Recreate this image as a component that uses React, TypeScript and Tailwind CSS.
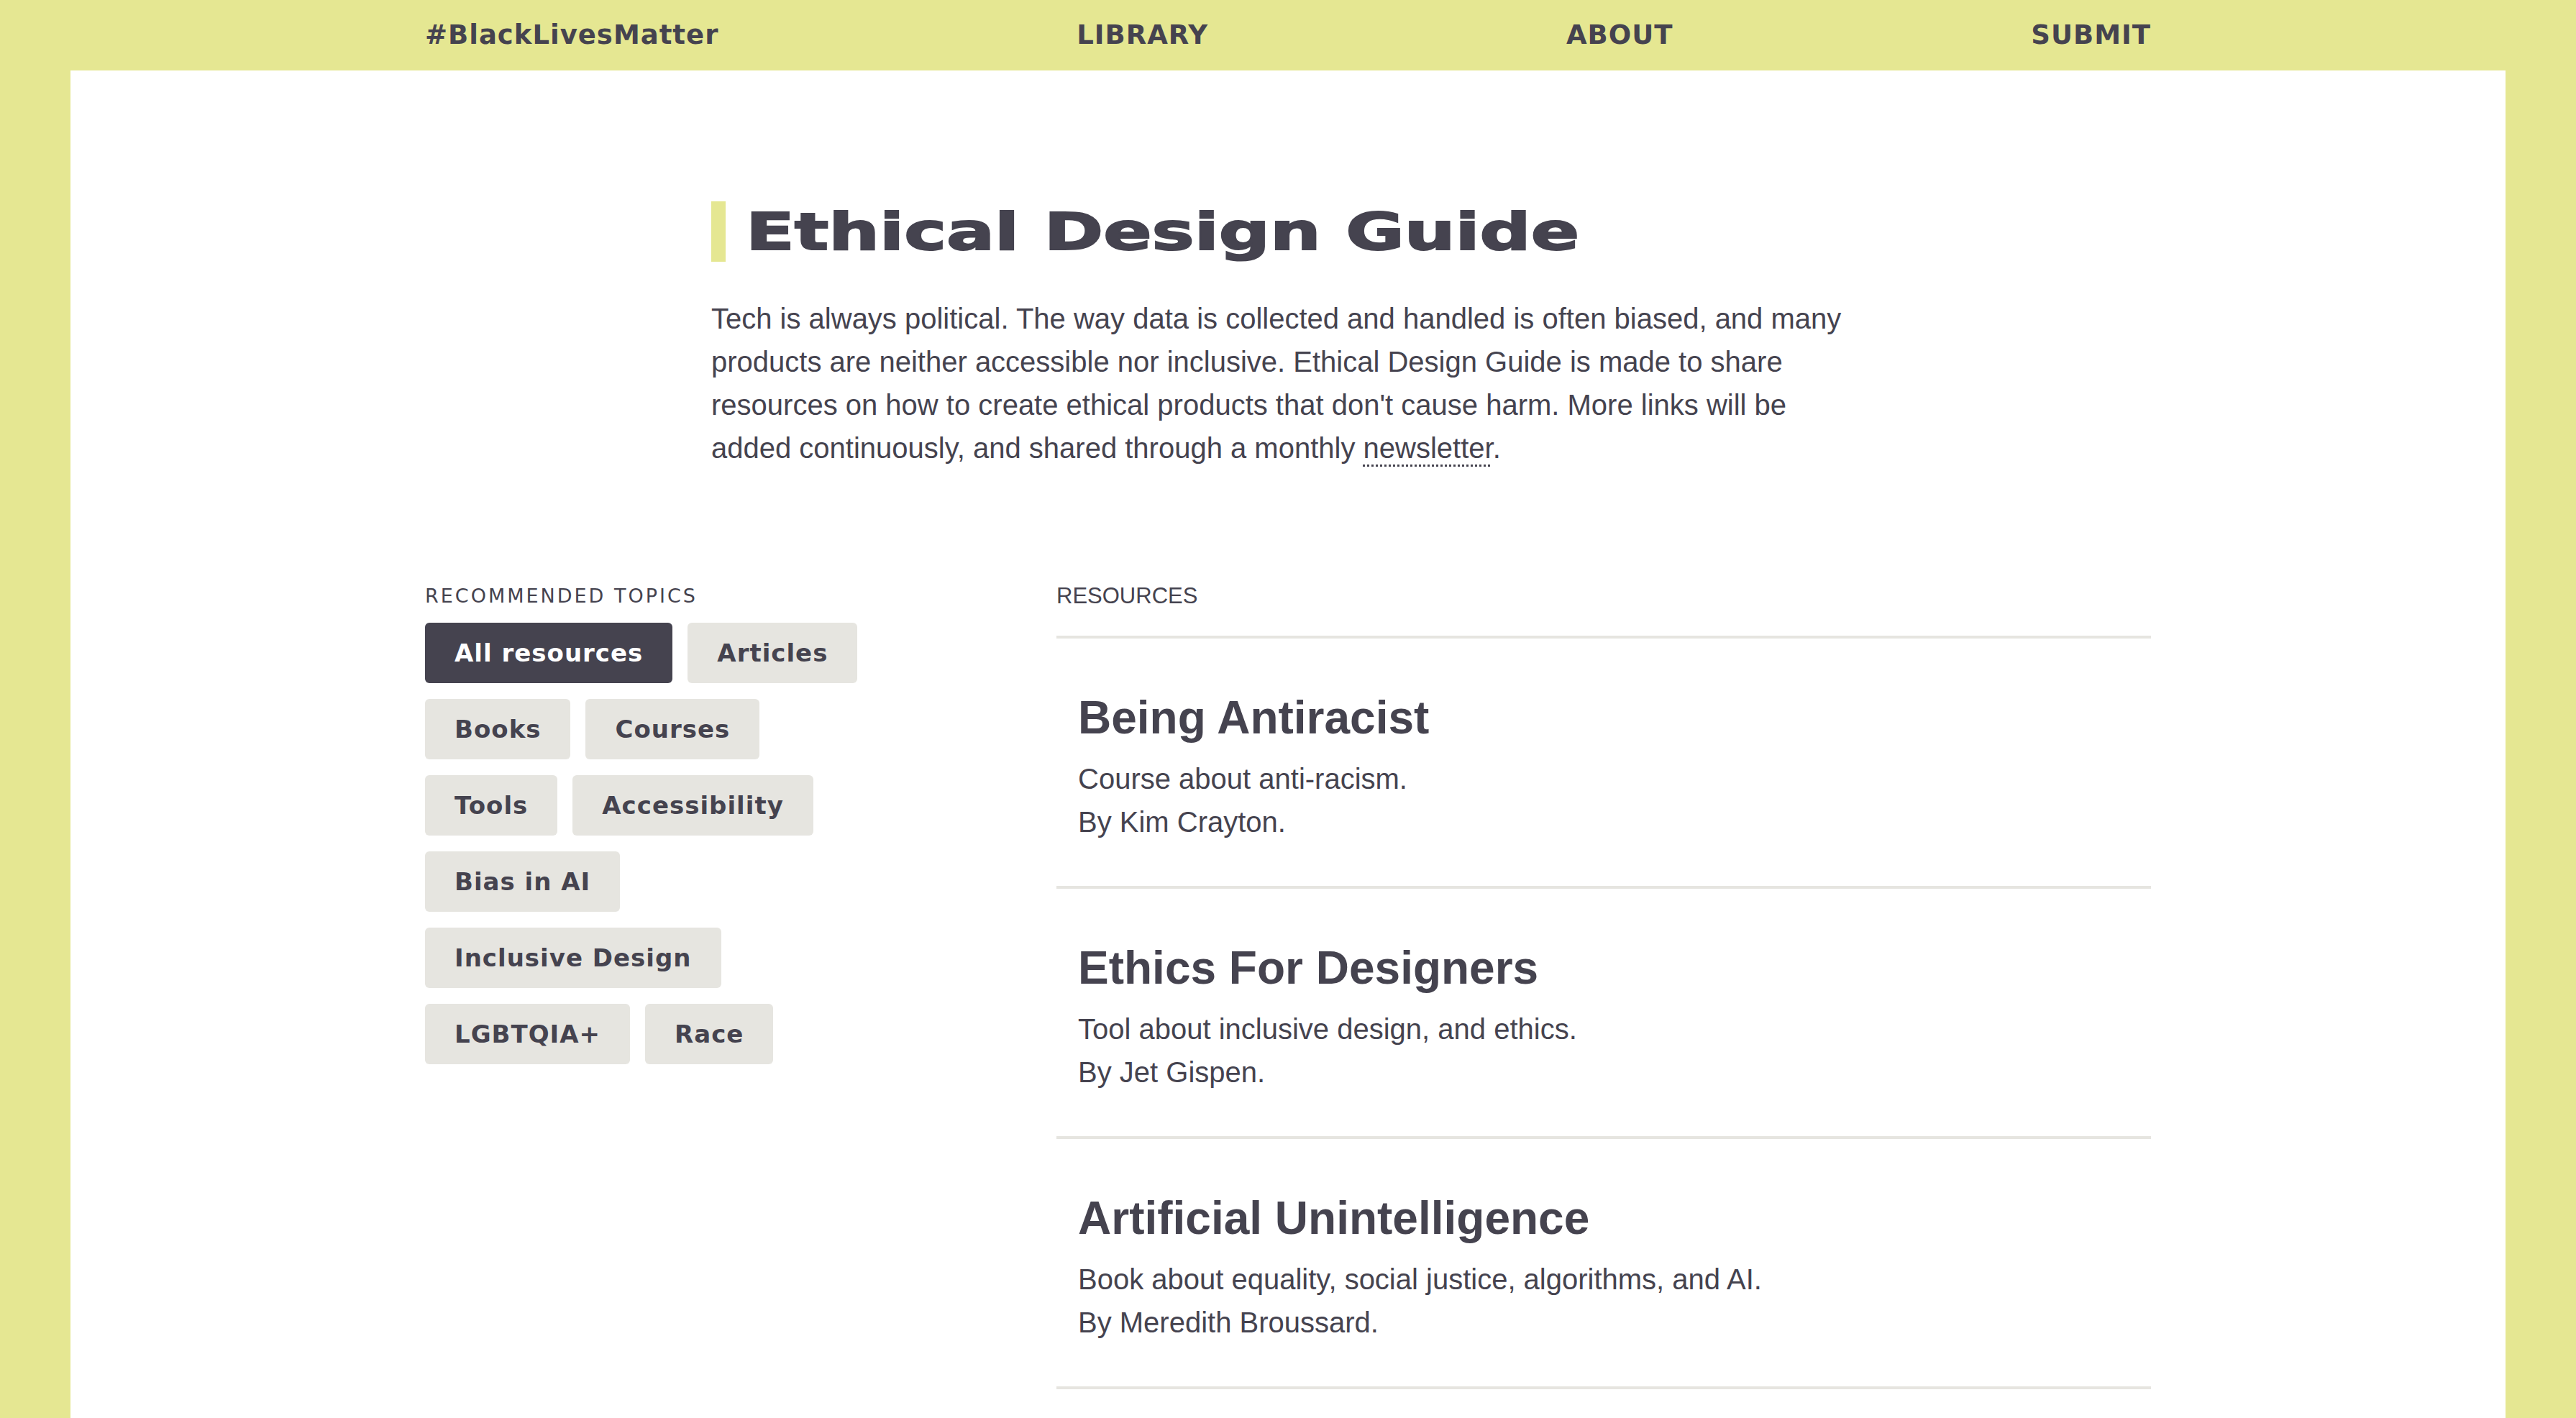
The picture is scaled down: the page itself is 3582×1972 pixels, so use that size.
const topics = [
  "All resources",
  "Articles",
  "Books",
  "Courses",
  "Tools",
  "Accessibility",
  "Bias in AI",
  "Inclusive Design",
  "LGBTQIA+",
  "Race",
];

const resources = [
  { title: "Being Antiracist", desc: "Course about anti-racism.", by: "Kim Crayton" },
  { title: "Ethics For Designers", desc: "Tool about inclusive design, and ethics.", by: "Jet Gispen" },
  { title: "Artificial Unintelligence", desc: "Book about equality, social justice, algorithms, and AI.", by: "Meredith Broussard" },
];

const wide = { fontFamily: '"DejaVu Sans", Verdana, sans-serif' };
const body = { fontFamily: '"Liberation Sans", Arial, sans-serif' };

export default function App() {
  return (
    <div className="min-h-screen bg-[#e5e792] px-[98px] text-[#45434f]">
      <header className="h-[98px]">
        <nav
          className="mx-auto flex h-full max-w-[2400px] items-center justify-between text-[37px] font-bold tracking-[1px]"
          style={wide}
        >
          <a href="#">#BlackLivesMatter</a>
          <a href="#">LIBRARY</a>
          <a href="#">ABOUT</a>
          <a href="#">SUBMIT</a>
        </nav>
      </header>

      <main className="min-h-[1874px] bg-white pb-[200px]">
        <section className="mx-auto w-[1604px] pt-[182px]">
          <div className="flex items-stretch gap-[28px]">
            <span className="block h-[84px] w-[20px] bg-[#e5e792]" />
            <h1
              className="origin-left scale-x-[1.38] text-[72px] leading-[84px] font-bold [-webkit-text-stroke:2px_#45434f]"
              style={wide}
            >
              Ethical Design Guide
            </h1>
          </div>
          <p className="mt-[49px] text-[40px] leading-[60px]" style={body}>
            Tech is always political. The way data is collected and handled is often biased, and many products
            are neither accessible nor inclusive. Ethical Design Guide is made to share resources on how to create
            ethical products that don't cause harm. More links will be added continuously, and shared through a
            monthly{" "}
            <a href="#" className="underline decoration-dotted decoration-[3px] underline-offset-[9px]">
              newsletter
            </a>
            .
          </p>
        </section>

        <div className="mx-auto mt-[158px] grid max-w-[2400px] grid-cols-[798px_1fr] gap-x-[80px]">
          <aside>
            <h2 className="h-[36px] text-[27px] leading-[36px] tracking-[3px]" style={wide}>
              RECOMMENDED TOPICS
            </h2>
            <div className="mt-[19px] flex w-[650px] flex-wrap gap-x-[21px] gap-y-[22px]">
              {topics.map((t, i) => (
                <button
                  key={t}
                  className={
                    i === 0
                      ? "flex h-[84px] items-center rounded-[6px] bg-[#45434f] px-[41px] text-[34px] font-bold tracking-[1px] text-white"
                      : "flex h-[84px] items-center rounded-[6px] bg-[#e6e5e0] px-[41px] text-[34px] font-bold tracking-[1px] text-[#45434f]"
                  }
                  style={wide}
                >
                  {t}
                </button>
              ))}
            </div>
          </aside>

          <section>
            <h2 className="h-[36px] text-[31px] leading-[36px]" style={body}>
              RESOURCES
            </h2>
            <ul className="mt-[37px] border-b-[4px] border-[#e6e5e0]" style={body}>
              {resources.map((r) => (
                <li key={r.title} className="border-t-[4px] border-[#e6e5e0] pt-[72px] pb-[59px] pl-[30px]">
                  <h3 className="text-[64px] leading-[76px] font-bold">{r.title}</h3>
                  <p className="mt-[17px] text-[40px] leading-[60px]">{r.desc}</p>
                  <p className="text-[40px] leading-[60px]">By {r.by}.</p>
                </li>
              ))}
            </ul>
          </section>
        </div>
      </main>
    </div>
  );
}
